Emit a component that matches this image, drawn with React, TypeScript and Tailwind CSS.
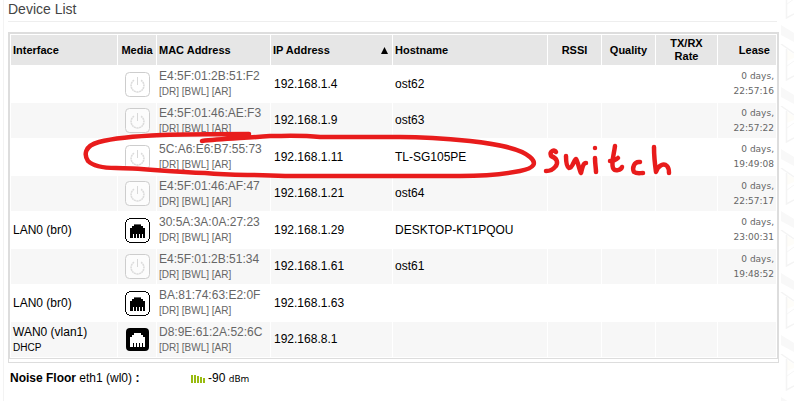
import React from "react";

type Media = "power" | "lan" | "wan";

interface Device {
  iface?: string;
  proto?: string;
  media: Media;
  mac: string;
  ip: string;
  host?: string;
  lease?: string;
}

const devices: Device[] = [
  { media: "power", mac: "E4:5F:01:2B:51:F2", ip: "192.168.1.4", host: "ost62", lease: "22:57:16" },
  { media: "power", mac: "E4:5F:01:46:AE:F3", ip: "192.168.1.9", host: "ost63", lease: "22:57:22" },
  { media: "power", mac: "5C:A6:E6:B7:55:73", ip: "192.168.1.11", host: "TL-SG105PE", lease: "19:49:08" },
  { media: "power", mac: "E4:5F:01:46:AF:47", ip: "192.168.1.21", host: "ost64", lease: "22:57:17" },
  { iface: "LAN0 (br0)", media: "lan", mac: "30:5A:3A:0A:27:23", ip: "192.168.1.29", host: "DESKTOP-KT1PQOU", lease: "23:00:31" },
  { media: "power", mac: "E4:5F:01:2B:51:34", ip: "192.168.1.61", host: "ost61", lease: "19:48:52" },
  { iface: "LAN0 (br0)", media: "lan", mac: "BA:81:74:63:E2:0F", ip: "192.168.1.63" },
  { iface: "WAN0 (vlan1)", proto: "DHCP", media: "wan", mac: "D8:9E:61:2A:52:6C", ip: "192.168.8.1" },
];

const PORT = "M5 20V10h2V8h2V6h7v2h2v2h2v10h-2v-4h-1v4h-2v-4h-1v4h-2v-4h-1v4h-2v-4H8v4z";

function MediaIcon({ kind }: { kind: Media }) {
  if (kind === "power") {
    return (
      <svg className="mx-auto block size-[25px]" viewBox="0 0 25 25" fill="none" aria-label="Inactive">
        <rect x="0.5" y="0.5" width="24" height="24" rx="4" fill="#fff" fillOpacity="0.6" stroke="#cdcdcd" />
        <path d="M9 8.2A6.4 6.4 0 1 0 16 8.2" stroke="#dcdcdc" strokeWidth="1.6" strokeDasharray="2 0.5" />
        <path d="M12.5 5v8" stroke="#d8d8d8" />
      </svg>
    );
  }
  if (kind === "lan") {
    return (
      <svg className="mx-auto block size-[25px]" viewBox="0 0 25 25" shapeRendering="crispEdges" aria-label="LAN">
        <path d="M4 0h17v1h2v1h1v2h1v17h-1v2h-1v1h-2v1H4v-1H2v-1H1v-2H0V4h1V2h1V1h2z" fill="#000" />
        <path d="M4 1h17v1h2v2h1v17h-1v2h-2v1H4v-1H2v-2H1V4h1V2h2z" fill="#fff" />
        <path d={PORT} fill="#000" />
        <path d="M9 6h7v1H9z" fill="#666" />
      </svg>
    );
  }
  return (
    <svg className="mx-auto block size-[25px]" viewBox="0 0 25 25" aria-label="WAN">
      <rect x="1" y="1" width="23" height="23" rx="4" fill="#000" />
      <path d={PORT} fill="#fff" shapeRendering="crispEdges" />
    </svg>
  );
}

function MacLinks() {
  return (
    <div className="text-[10px] leading-4">
      <a href="#dr">[DR]</a> <a href="#bwl">[BWL]</a> <a href="#ar">[AR]</a>
    </div>
  );
}

function CubePattern() {
  return (
    <svg className="w-3.5 shrink-0 self-stretch" aria-hidden="true">
      <defs>
        <pattern id="cubes" width="14" height="62" patternUnits="userSpaceOnUse" y="44">
          <path d="M7 6v11l7-3V10z" fill="#fefdf9" />
          <path d="M1 0L14 9" stroke="#f4f4f4" strokeWidth="1.5" />
          <path d="M6.500 5v31L14 32" stroke="#f4f4f4" fill="none" strokeWidth="1.5" />
          <path d="M7 22l7-5" stroke="#f6f6f6" />
          <path d="M1 43l13 8v9L1 53z" fill="#f8f8f8" />
        </pattern>
      </defs>
      <rect width="14" height="100%" fill="url(#cubes)" />
    </svg>
  );
}

function Annotation() {
  return (
    <svg
      className="pointer-events-none absolute left-0 top-0 h-[401px] w-[794px]"
      viewBox="0 0 794 401"
      fill="none"
      stroke="#e81c1c"
      strokeWidth="4.500"
      strokeLinecap="round"
      strokeLinejoin="round"
      role="img"
      aria-label="switch"
    >
      <path d="M249 134C220 134 190 134 162 135C138 136 114 138 99 142C84 146 84 155 88 161C93 166 103 168 116 168C140 168 170 172 205 173C235 176 250 174 285 176H460C480 176 505 174 520 171C535 168 537 163 530 157C520 148 496 144 470 141C440 138 425 137 400 137H320C300 135 285 136 270 136C245 138 220 139 202 141" />
      <path d="M556 152C555 149 549 151 551 156C557 158 559 163 555 167C552 171 549 171 546 171" />
      <path d="M566 156C566 162 567 167 569 168C573 168 574 159 576 159C578 162 580 172 581 173C582 169 583 163 586 163" />
      <path d="M595 158C595 164 596 168 596 172M595 148v0" />
      <path d="M615 146C614 154 611 163 613 168C615 172 621 170 622 167M610 161C613 161 616 160 618 158" />
      <path d="M640 162C634 161 632 168 634 172C637 174 640 173 643 173" />
      <path d="M654 147C654 157 655 165 656 172C658 165 664 163 667 166C669 168 669 170 669 173" />
    </svg>
  );
}

const headCell = "bg-[#e6e6e6] px-0.5 text-[11px] leading-[13px] font-bold";
const cell = "p-0 px-0.5 group-even:bg-[#f7f7f7]";

export default function App() {
  return (
    <div className="relative flex min-h-screen overflow-hidden bg-white font-['Liberation_Sans',Arial,sans-serif] text-xs text-black">
      <main className="ml-[3px] min-w-0 flex-1 border-l border-[#f3f3f3] pr-px pl-1">
        <h2 className="mr-0.5 h-[22px] border-b border-[#eeeeee] text-sm leading-[18px] text-[#444]">Device List</h2>
        <div className="mt-2.5 border border-[#dddddd] pb-[3px]">
          <table className="w-full table-fixed border-separate border-spacing-px border border-[#dddddd]">
            <colgroup>
              <col className="w-[106px]" />
              <col className="w-[38px]" />
              <col className="w-[113px]" />
              <col className="w-[121px]" />
              <col />
              <col className="w-[53px]" />
              <col className="w-[53px]" />
              <col className="w-[61px]" />
              <col className="w-[58px]" />
            </colgroup>
            <thead>
              <tr className="h-[30px]">
                <th className={`${headCell} text-left`}>Interface</th>
                <th className={`${headCell} text-center`}>Media</th>
                <th className={`${headCell} text-left`}>MAC Address</th>
                <th className={`${headCell} text-left`}>
                  <span className="flex items-center justify-between pr-0.5">
                    IP Address
                    <svg className="size-[7px]" viewBox="0 0 7 7" aria-label="sorted ascending">
                      <path d="M3.5 0L7 7H0z" />
                    </svg>
                  </span>
                </th>
                <th className={`${headCell} text-left`}>Hostname</th>
                <th className={`${headCell} text-center`}>RSSI</th>
                <th className={`${headCell} text-center`}>Quality</th>
                <th className={`${headCell} text-center`}>TX/RX Rate</th>
                <th className="bg-[#e6e6e6] pr-1.5 text-right text-[11px] font-bold">Lease</th>
              </tr>
            </thead>
            <tbody>
              {devices.map((d) => (
                <tr key={d.mac} className="group h-9 even:h-[35px]">
                  <td className={cell}>
                    <div className="leading-4">{d.iface}</div>
                    {d.proto && <div className="text-[10px] leading-4">{d.proto}</div>}
                  </td>
                  <td className={cell}>
                    <MediaIcon kind={d.media} />
                  </td>
                  <td className={`${cell} text-[#666]`}>
                    <div className="leading-4">{d.mac}</div>
                    <MacLinks />
                  </td>
                  <td className={`${cell} pl-[3px] group-even:pb-px`}>{d.ip}</td>
                  <td className={`${cell} group-even:pb-px`}>{d.host}</td>
                  <td className={cell} />
                  <td className={cell} />
                  <td className={cell} />
                  <td className={`${cell} text-right font-['DejaVu_Sans',Verdana,sans-serif] text-[9px] leading-[15px] text-[#666]`}>
                    {d.lease && (
                      <>
                        0 days,
                        <br />
                        {d.lease}
                      </>
                    )}
                  </td>
                </tr>
              ))}
            </tbody>
          </table>
        </div>
        <div className="mt-[7px] flex px-0.5 leading-4">
          <div className="w-[181px]">
            <b>Noise Floor</b> eth1 (wl0) <b>:</b>
          </div>
          <div className="flex items-center gap-[3px]">
            <svg className="h-2 w-[14px]" viewBox="0 0 14 8" fill="#99bb11" aria-label="signal">
              <path d="M0 0h2v8H0zM3 0h2v8H3zM6 1h2v7H6zM9 2h2v6H9zM12 3h2v5h-2z" />
            </svg>
            <span>
              -90 <span className="font-['DejaVu_Sans',Verdana,sans-serif] text-[9px]">dBm</span>
            </span>
          </div>
        </div>
      </main>
      <CubePattern />
      <Annotation />
    </div>
  );
}
